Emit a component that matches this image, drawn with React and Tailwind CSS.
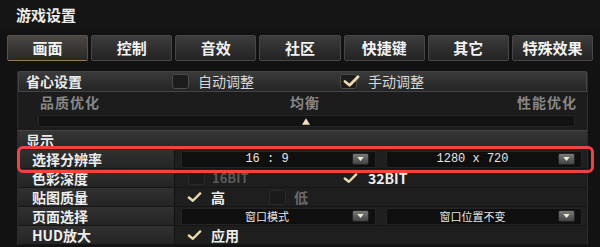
import React from 'react';

const tabs = ['画面', '控制', '音效', '社区', '快捷键', '其它', '特殊效果'];

const Check = ({ on, dim }) => (
  <span
    className={`relative inline-flex w-[17px] h-[15px] rounded-[3px] border ${
      dim ? 'border-[#2a2a2a] bg-[#1a1a1a]' : 'border-[#4a4a4a] bg-[#1c1c1c]'
    }`}
  >
    {on && (
      <svg viewBox="0 0 20 16" className="absolute left-[1px] -top-[1px] w-[19px] h-[15px]">
        <path d="M3 8 L8 12 L17 3" fill="none" stroke="#e8d9b0" strokeWidth="3" strokeLinecap="round" strokeLinejoin="round" />
      </svg>
    )}
  </span>
);

const Tick = () => (
  <svg viewBox="0 0 20 16" className="w-[17px] h-[13px]">
    <path d="M3 8 L8 12 L17 3" fill="none" stroke="#e8d9b0" strokeWidth="3" strokeLinecap="round" strokeLinejoin="round" />
  </svg>
);

const Arrow = () => (
  <span className="flex items-center justify-center w-[17px] h-[12px] rounded-[2px] bg-gradient-to-b from-[#7a7a7a] to-[#444] border border-[#222]">
    <svg viewBox="0 0 8 5" className="w-[7px] h-[4px]">
      <path d="M0 0 L8 0 L4 5 Z" fill="#f2ead2" />
    </svg>
  </span>
);

const Drop = ({ text, mono, w }) => (
  <div className={`flex items-center h-[17px] ${w} bg-[#0f0f0f] border border-[#242424] pr-[6px]`}>
    <span
      className={`flex-1 text-center text-[#e6e6e6] ${
        mono ? "font-['Liberation_Mono',monospace] text-[12px]" : 'text-[11px]'
      }`}
    >
      {text}
    </span>
    <Arrow />
  </div>
);

const Row = ({ label, children }) => (
  <div className="flex h-[19px] border-b border-[#161616]">
    <div className="w-[157px] flex items-center pl-[14px] bg-gradient-to-b from-[#313131] to-[#242424] border-r border-[#111] text-[14px] font-bold text-[#ededed]">
      {label}
    </div>
    <div className="flex-1 flex items-center bg-[#1e1e1e]">{children}</div>
  </div>
);

export default function App() {
  return (
    <div className="relative w-[600px] h-[247px] overflow-hidden bg-[#121212] font-['Noto_Sans_CJK_SC','Noto_Sans',sans-serif]">
      <div className="h-[31px] flex items-center pl-[16px] text-[15px] font-bold text-[#ececec] bg-[#151515]">
        游戏设置
      </div>
      <div className="flex gap-[3px] px-[7px] pt-[4px]">
        {tabs.map((t, i) => (
          <div
            key={t}
            className={`flex-1 h-[26px] flex items-center justify-center text-[15px] font-bold text-[#f2f2f2] rounded-[2px] bg-gradient-to-b ${
              i === 0
                ? 'from-[#4a4744] to-[#2a2826] border border-[#5a5148] border-b-[#9a7a52]'
                : 'from-[#3d3d3d] to-[#232323] border border-[#474747]'
            }`}
          >
            {t}
          </div>
        ))}
      </div>

      <div className="ml-[17px] mr-[12px] mt-[10px] border-l border-r border-[#2c2c2c] bg-[#1a1a1a]">
        <div className="flex items-center h-[21px] bg-gradient-to-b from-[#3b3b3b] to-[#252525] border border-[#444] rounded-t-[2px]">
          <span className="w-[153px] pl-[7px] text-[14px] font-bold text-[#ececec]">省心设置</span>
          <Check />
          <span className="w-[151px] pl-[9px] text-[14px] text-[#d8d8d8]">自动调整</span>
          <Check on />
          <span className="ml-[11px] text-[14px] text-[#d8d8d8]">手动调整</span>
        </div>
        <div className="flex items-center h-[20px] pl-[22px] pr-[10px] text-[14px] font-bold tracking-[1px] text-[#878787] bg-[#1c1c1c]">
          <span className="w-[250px]">品质优化</span>
          <span>均衡</span>
          <span className="flex-1 text-right">性能优化</span>
        </div>
        <div className="h-[18px] flex items-center pl-[20px] pr-[12px] bg-[#1c1c1c]">
          <div className="relative w-full h-[12px] bg-[#121212] border border-[#262626] rounded-[2px]">
            <svg viewBox="0 0 10 8" className="absolute left-[263px] top-[2px] w-[8px] h-[7px]">
              <path d="M5 0 L10 8 L0 8 Z" fill="#f0e2c0" />
            </svg>
          </div>
        </div>
        <div className="h-[20px] flex items-center pl-[8px] text-[14px] font-bold text-[#ececec] bg-gradient-to-b from-[#363636] to-[#262626] border-t border-[#444]">
          显示
        </div>
        <Row label="选择分辨率">
          <div className="flex gap-[10px] pl-[6px]">
            <Drop text="16 : 9" mono w="w-[195px]" />
            <Drop text="1280 x 720" mono w="w-[196px]" />
          </div>
        </Row>
        <Row label="色彩深度">
          <span className="ml-[13px]">
            <Check dim />
          </span>
          <span className="w-[137px] pl-[7px] text-[13px] font-bold text-[#5a5a5a]">16BIT</span>
          <Tick />
          <span className="ml-[9px] text-[14px] font-bold text-[#eeeeee]">32BIT</span>
        </Row>
        <Row label="贴图质量">
          <span className="ml-[11px]">
            <Tick />
          </span>
          <span className="w-[66px] pl-[8px] text-[14px] font-bold text-[#eeeeee]">高</span>
          <Check dim />
          <span className="ml-[8px] text-[14px] font-bold text-[#6a6a6a]">低</span>
        </Row>
        <Row label="页面选择">
          <div className="flex gap-[10px] pl-[6px]">
            <Drop text="窗口模式" w="w-[195px]" />
            <Drop text="窗口位置不变" w="w-[196px]" />
          </div>
        </Row>
        <Row label="HUD放大">
          <span className="ml-[11px]">
            <Tick />
          </span>
          <span className="ml-[8px] text-[14px] font-bold text-[#eeeeee]">应用</span>
        </Row>
      </div>

      <div className="absolute left-[17px] top-[146px] w-[577px] h-[27px] rounded-[6px] border-[3px] border-[#ef4444] pointer-events-none" />
    </div>
  );
}
